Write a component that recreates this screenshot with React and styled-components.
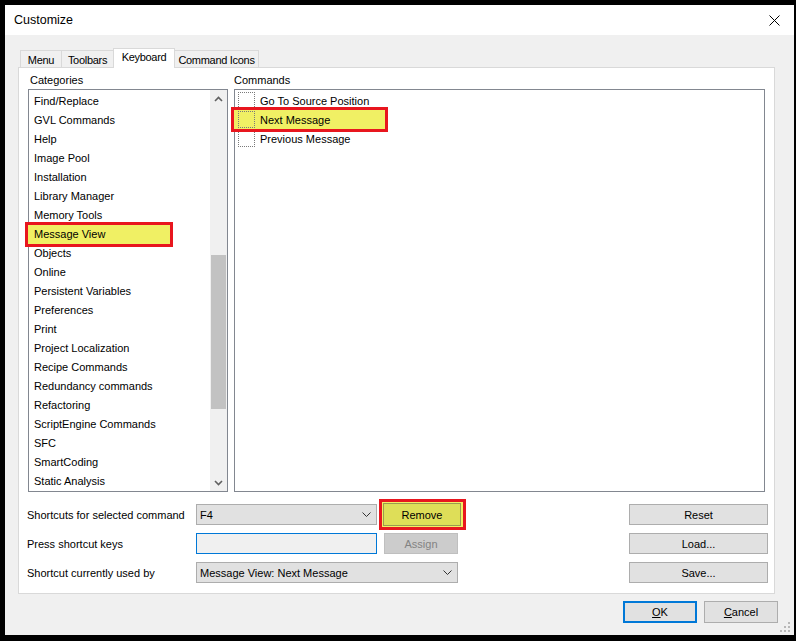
import React from "react";
import styled, { createGlobalStyle } from "styled-components";

const categories = [
  "Find/Replace",
  "GVL Commands",
  "Help",
  "Image Pool",
  "Installation",
  "Library Manager",
  "Memory Tools",
  "Message View",
  "Objects",
  "Online",
  "Persistent Variables",
  "Preferences",
  "Print",
  "Project Localization",
  "Recipe Commands",
  "Redundancy commands",
  "Refactoring",
  "ScriptEngine Commands",
  "SFC",
  "SmartCoding",
  "Static Analysis",
];

const commands = ["Go To Source Position", "Next Message", "Previous Message"];

const tabs = [
  { label: "Menu", w: 42 },
  { label: "Toolbars", w: 53 },
  { label: "Keyboard", w: 62, active: true },
  { label: "Command Icons", w: 85 },
];

const GlobalStyle = createGlobalStyle`
  html, body {
    margin: 0;
    padding: 0;
    background: #000;
  }
  body {
    font-family: "Liberation Sans", Arial, sans-serif;
    font-size: 11px;
    color: #000;
  }
`;

const Page = styled.div`
  width: 796px;
  height: 641px;
  box-sizing: border-box;
  padding: 5px 0 0 5px;
  background: #000;
`;

const Window = styled.div`
  position: relative;
  width: 789px;
  height: 630px;
  background: #f0f0f0;
  display: flex;
  flex-direction: column;
`;

const TitleBar = styled.div`
  height: 30px;
  flex-shrink: 0;
  background: #fff;
  display: flex;
  align-items: center;
  justify-content: space-between;
  padding: 0 14px 0 9px;
`;

const Title = styled.span`
  font-size: 12.5px;
`;

const Content = styled.div`
  display: flex;
  flex-direction: column;
  padding: 13px 19px 0 13px;
`;

const TabStrip = styled.div`
  display: flex;
  align-items: flex-end;
  height: 19px;
  padding-left: 2px;
  position: relative;
  z-index: 1;
`;

const Tab = styled.div`
  box-sizing: border-box;
  width: ${(p) => p.$w}px;
  height: ${(p) => (p.$active ? 20 : 17)}px;
  margin-right: -1px;
  margin-bottom: ${(p) => (p.$active ? -1 : 0)}px;
  border: 1px solid #d9d9d9;
  border-bottom: none;
  background: ${(p) => (p.$active ? "#fff" : "#f0f0f0")};
  position: relative;
  z-index: ${(p) => (p.$active ? 2 : 1)};
  text-align: center;
  line-height: ${(p) => (p.$active ? 17 : 18)}px;
  letter-spacing: -0.3px;
  white-space: nowrap;
`;

const Panel = styled.div`
  box-sizing: border-box;
  height: 527px;
  border: 1px solid #d9d9d9;
  background: #fff;
  padding: 4px 9px 8px 9px;
  display: flex;
  flex-direction: column;
`;

const ListsRow = styled.div`
  display: grid;
  grid-template-columns: 200px 531px;
  column-gap: 6px;
`;

const Column = styled.div`
  display: flex;
  flex-direction: column;
`;

const GroupLabel = styled.div`
  height: 16px;
  line-height: 16px;
  margin-bottom: 1px;
  padding-left: ${(p) => p.$indent || 0}px;
`;

const ListBox = styled.div`
  box-sizing: border-box;
  height: 403px;
  border: 1px solid #828790;
  background: #fff;
  display: flex;
`;

const Items = styled.div`
  flex: 1;
  padding-top: ${(p) => p.$top}px;
`;

const CategoryItem = styled.div`
  height: 19px;
  line-height: 19px;
  padding-left: ${(p) => (p.$hl ? 6 : 5)}px;
  margin-left: ${(p) => (p.$hl ? -1 : 0)}px;
  width: ${(p) => (p.$hl ? "142px" : "auto")};
  box-sizing: border-box;
  white-space: nowrap;
  background: ${(p) => (p.$hl ? "#f0f064" : "transparent")};
  outline: ${(p) => (p.$hl ? "3px solid #e8161e" : "none")};
  position: relative;
  z-index: ${(p) => (p.$hl ? 2 : 0)};
`;

const CommandItem = styled.div`
  display: flex;
  align-items: center;
  height: 19px;
  box-sizing: border-box;
  padding-left: ${(p) => (p.$hl ? 4 : 3)}px;
  margin-left: ${(p) => (p.$hl ? -1 : 0)}px;
  width: ${(p) => (p.$hl ? "151px" : "auto")};
  background: ${(p) => (p.$hl ? "#f0f064" : "transparent")};
  outline: ${(p) => (p.$hl ? "3px solid #e8161e" : "none")};
  position: relative;
  z-index: ${(p) => (p.$hl ? 2 : 0)};
  white-space: nowrap;
`;

const CheckSlot = styled.span`
  box-sizing: border-box;
  width: 17px;
  height: 17px;
  border: 1px dotted #7a7a7a;
  margin-right: 5px;
  flex-shrink: 0;
`;

const ScrollBar = styled.div`
  width: 17px;
  background: #f0f0f0;
  display: flex;
  flex-direction: column;
`;

const ArrowCell = styled.div`
  height: 17px;
  display: flex;
  align-items: center;
  justify-content: center;
`;

const Track = styled.div`
  flex: 1;
`;

const Thumb = styled.div`
  margin: 148px 1px 0 1px;
  height: 154px;
  background: #c2c2c2;
`;

const BottomRows = styled.div`
  margin-top: 12px;
  display: flex;
  flex-direction: column;
  gap: 8px;
`;

const Row = styled.div`
  height: 21px;
  display: flex;
  align-items: center;
`;

const FieldLabel = styled.div`
  width: 169px;
  margin-left: -1px;
  white-space: nowrap;
`;

const Combo = styled.div`
  box-sizing: border-box;
  width: ${(p) => p.$w}px;
  height: 21px;
  border: 1px solid #adadad;
  background: #e1e1e1;
  display: flex;
  align-items: center;
  justify-content: space-between;
  padding: 0 5px 0 3px;
  white-space: nowrap;
`;

const KeyInput = styled.div`
  box-sizing: border-box;
  width: 181px;
  height: 21px;
  border: 1px solid #0078d7;
  background: #f0f0f0;
`;

const Button = styled.div`
  box-sizing: border-box;
  width: ${(p) => p.$w}px;
  height: ${(p) => p.$h || 21}px;
  border: ${(p) => (p.$default ? "2px solid #0078d7" : "1px solid #adadad")};
  background: #e1e1e1;
  display: flex;
  align-items: center;
  justify-content: center;
  white-space: nowrap;
  margin-left: ${(p) => p.$ml || 0}px;
`;

const DisabledButton = styled(Button)`
  background: #cccccc;
  border-color: #bfbfbf;
  color: #838383;
`;

const SideButton = styled(Button)`
  margin-left: auto;
  margin-right: -3px;
`;

const HighlightWrap = styled.div`
  margin-left: 2px;
  border: 3px solid #e8161e;
  background: #f0f064;
  padding: 1px 2px 1px 1px;
  position: relative;
  z-index: 1;
`;

const RemoveButton = styled(Button)`
  background: #dede58;
  border-color: #9a9a50;
`;

const Footer = styled.div`
  display: flex;
  justify-content: flex-end;
  gap: 7px;
  margin-top: 7px;
  margin-right: -3px;
`;

const Grip = styled.svg`
  position: absolute;
  right: 3px;
  bottom: 2px;
`;

const Chevron = ({ up }) => (
  <svg width="9" height="6" viewBox="0 0 9 6">
    <polyline
      points={up ? "1,5 4.5,1.5 8,5" : "1,1 4.5,4.5 8,1"}
      fill="none"
      stroke="#606060"
      strokeWidth="1.6"
    />
  </svg>
);

const ComboArrow = () => (
  <svg width="9" height="5" viewBox="0 0 9 5">
    <polyline points="0.5,0.5 4.5,4.5 8.5,0.5" fill="none" stroke="#333" strokeWidth="1" />
  </svg>
);

export default function App() {
  return (
    <>
      <GlobalStyle />
      <Page>
        <Window>
          <TitleBar>
            <Title>Customize</Title>
            <svg width="11" height="11" viewBox="0 0 11 11">
              <path d="M0.5 0.5 L10.5 10.5 M10.5 0.5 L0.5 10.5" stroke="#000" strokeWidth="1" />
            </svg>
          </TitleBar>
          <Content>
            <TabStrip>
              {tabs.map((t) => (
                <Tab key={t.label} $w={t.w} $active={t.active}>
                  {t.label}
                </Tab>
              ))}
            </TabStrip>
            <Panel>
              <ListsRow>
                <Column>
                  <GroupLabel $indent={2}>Categories</GroupLabel>
                  <ListBox>
                    <Items $top={2}>
                      {categories.map((c) => (
                        <CategoryItem key={c} $hl={c === "Message View"}>
                          {c}
                        </CategoryItem>
                      ))}
                    </Items>
                    <ScrollBar>
                      <ArrowCell>
                        <Chevron up />
                      </ArrowCell>
                      <Track>
                        <Thumb />
                      </Track>
                      <ArrowCell>
                        <Chevron />
                      </ArrowCell>
                    </ScrollBar>
                  </ListBox>
                </Column>
                <Column>
                  <GroupLabel>Commands</GroupLabel>
                  <ListBox>
                    <Items $top={1}>
                      {commands.map((c) => (
                        <CommandItem key={c} $hl={c === "Next Message"}>
                          <CheckSlot />
                          {c}
                        </CommandItem>
                      ))}
                    </Items>
                  </ListBox>
                </Column>
              </ListsRow>
              <BottomRows>
                <Row>
                  <FieldLabel>Shortcuts for selected command</FieldLabel>
                  <Combo $w={181}>
                    F4
                    <ComboArrow />
                  </Combo>
                  <HighlightWrap>
                    <RemoveButton $w={78} $h={23}>Remove</RemoveButton>
                  </HighlightWrap>
                  <SideButton $w={139}>Reset</SideButton>
                </Row>
                <Row>
                  <FieldLabel>Press shortcut keys</FieldLabel>
                  <KeyInput />
                  <DisabledButton $w={74} $ml={7}>Assign</DisabledButton>
                  <SideButton $w={139}>Load...</SideButton>
                </Row>
                <Row>
                  <FieldLabel>Shortcut currently used by</FieldLabel>
                  <Combo $w={262}>
                    Message View: Next Message
                    <ComboArrow />
                  </Combo>
                  <SideButton $w={139}>Save...</SideButton>
                </Row>
              </BottomRows>
            </Panel>
            <Footer>
              <Button $w={74} $h={22} $default>
                <u>O</u>K
              </Button>
              <Button $w={74} $h={22}>
                <u>C</u>ancel
              </Button>
            </Footer>
          </Content>
          <Grip width="12" height="12" viewBox="0 0 12 12">
            {[
              [10, 2],
              [10, 6],
              [6, 6],
              [10, 10],
              [6, 10],
              [2, 10],
            ].map(([x, y]) => (
              <rect key={`${x}-${y}`} x={x - 1} y={y - 1} width="2" height="2" fill="#b8b8b8" />
            ))}
          </Grip>
        </Window>
      </Page>
    </>
  );
}
